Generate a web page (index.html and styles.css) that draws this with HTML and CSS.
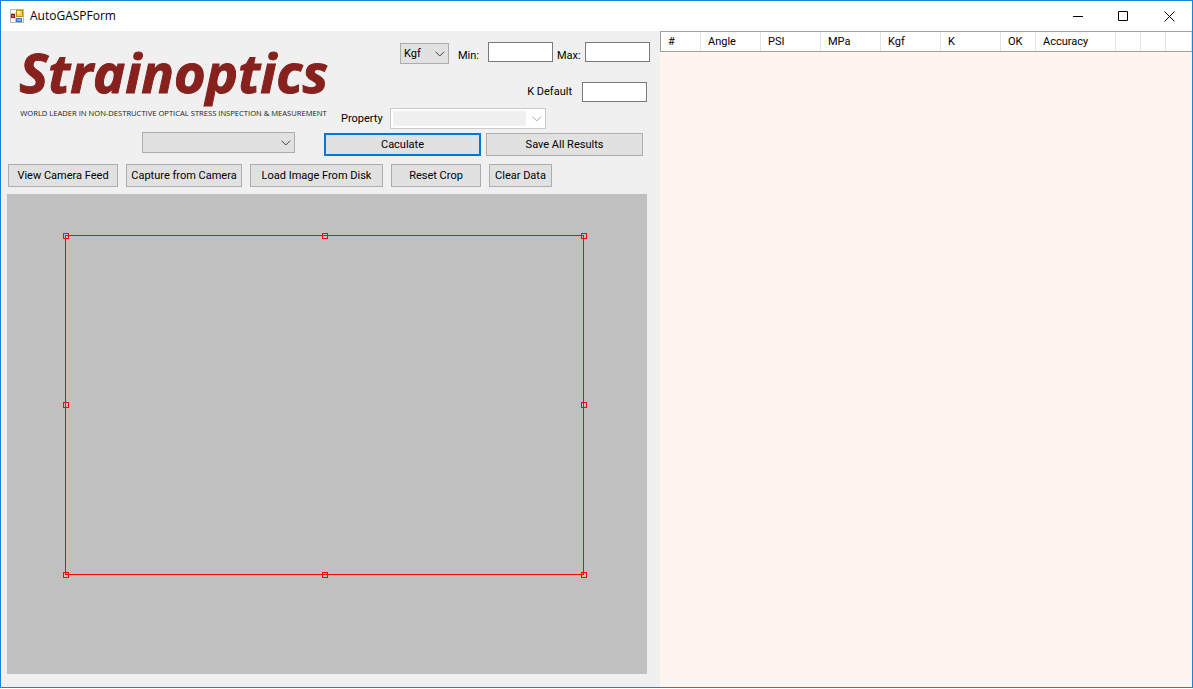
FILE: index.html
```html
<!DOCTYPE html>
<html lang="en">
<head>
<meta charset="utf-8">
<title>AutoGASPForm</title>
<link rel="stylesheet" href="styles.css">
</head>
<body>
<div class="window">
  <header class="titlebar">
    <svg class="app-icon" width="14" height="14" viewBox="0 0 14 14" aria-hidden="true">
      <rect x=".5" y=".5" width="13" height="13" fill="#fff" stroke="#b8b8b8"/>
      <path d="M0 4.500h6M5.500 8v6" stroke="#c4c4c4" fill="none"/>
      <rect x="6.500" y="1.500" width="6" height="6" fill="#fbd14b" stroke="#c08a10"/>
      <rect x="7" y="2" width="3" height="3" fill="#fff0a8"/>
      <rect x="1.500" y="5.500" width="3" height="3" fill="#e05a4a" stroke="#8c1c1c"/>
      <rect x="6.500" y="9.500" width="5" height="3" fill="#7fb0ff" stroke="#3c6fd0"/>
    </svg>
    <h1 class="title">AutoGASPForm</h1>
    <button class="caption-btn" aria-label="Minimize"><svg width="11" height="11"><path d="M1 5.500h10" stroke="#000"/></svg></button>
    <button class="caption-btn" aria-label="Maximize"><svg width="11" height="11"><path d="M.5 .5h9v9h-9z" stroke="#000" fill="none"/></svg></button>
    <button class="caption-btn" aria-label="Close"><svg width="11" height="11"><path d="M.5 .5l10 10M10.500 .5l-10 10" stroke="#000"/></svg></button>
  </header>
  <main class="content">
    <section class="left">
      <div class="top">
        <div class="brand">
          <svg class="brand-mark" viewBox="0 0 3100 800">
            <text class="logo" x="-8" y="515">Strainoptics</text>
            <text class="tagline" x="3" y="753">WORLD LEADER IN NON-DESTRUCTIVE OPTICAL STRESS INSPECTION &amp; MEASUREMENT</text>
          </svg>
          <span class="combo camera"><select aria-label="Camera"><option></option></select><svg class="chevron" width="10" height="6"><path d="M.5 .7l4.300 4.300 4.300-4.300" fill="none" stroke="#444"/></svg></span>
        </div>
        <div class="controls">
          <div class="row range">
            <span class="combo unit"><select aria-label="Unit"><option>Kgf</option></select><svg class="chevron" width="10" height="6"><path d="M.5 .7l4.300 4.300 4.300-4.300" fill="none" stroke="#444"/></svg></span>
            <label class="min-label" for="min">Min:</label><input id="min" type="text">
            <label class="max-label" for="max">Max:</label><input id="max" type="text">
          </div>
          <div class="row kdef"><label for="kd">K Default</label><input id="kd" type="text"></div>
          <div class="row prop"><label for="prop">Property</label>
            <span class="combo property"><select id="prop" disabled><option></option></select><svg class="chevron" width="10" height="6"><path d="M.5 .7l4.300 4.300 4.300-4.300" fill="none" stroke="#aaa"/></svg></span>
          </div>
          <div class="row actions"><button class="btn default">Caculate</button><button class="btn">Save All Results</button></div>
        </div>
      </div>
      <div class="toolbar">
        <button class="btn feed">View Camera Feed</button>
        <button class="btn capture">Capture from Camera</button>
        <button class="btn load">Load Image From Disk</button>
        <button class="btn reset">Reset Crop</button>
        <button class="btn clear">Clear Data</button>
      </div>
      <div class="canvas">
        <div class="crop">
          <i class="handle t l"></i><i class="handle t c"></i><i class="handle t r"></i>
          <i class="handle m l"></i><i class="handle m r"></i>
          <i class="handle b l"></i><i class="handle b c"></i><i class="handle b r"></i>
        </div>
      </div>
    </section>
    <section class="results">
      <table>
        <colgroup><col class="w40"><col class="w60"><col class="w60"><col class="w60"><col class="w60"><col class="w60"><col class="w35"><col class="w80"><col class="w25"><col class="w25"><col></colgroup>
        <thead><tr><th>#</th><th>Angle</th><th>PSI</th><th>MPa</th><th>Kgf</th><th>K</th><th>OK</th><th>Accuracy</th><th></th><th></th><th></th></tr></thead>
      </table>
    </section>
  </main>
</div>
</body>
</html>
```
FILE: styles.css
```css
* { box-sizing: border-box; }
body {
  margin: 0;
  background: #fff;
  color: #000;
  font: 11px/14px Roboto, "Liberation Sans", sans-serif;
}
button, input, select { font: inherit; color: inherit; margin: 0; border-radius: 0; }
.window {
  display: flex;
  flex-direction: column;
  height: calc(100vh - 1px);
  border: 1px solid #1883d7;
  background: #f0f0f0;
}
.titlebar { display: flex; align-items: center; height: 30px; padding-left: 9px; background: #fff; }
.title { flex: 1; margin: 0 0 0 6px; font: 12px/16px "Open Sans", "Noto Sans", sans-serif; }
.caption-btn {
  display: grid;
  place-items: center;
  width: 46px;
  height: 28px;
  padding: 0;
  border: 0;
  background: none;
}
.content { display: grid; grid-template-columns: minmax(0, 659fr) minmax(0, 532fr); flex: 1; }
.left { display: flex; flex-direction: column; padding: 0 13px 13px 6px; }
.top { display: flex; height: 125px; }
.brand { flex: 1; min-width: 0; padding: 10px 0 0 13px; }
.brand-mark { display: block; width: 310px; height: 80px; overflow: visible; }
.logo { fill: #86211d; stroke: #86211d; stroke-width: 10px; font: italic 700 542px "Open Sans", "Noto Sans", sans-serif; }
.tagline { fill: #222; font: 76px "Open Sans", "Noto Sans", sans-serif; }
.combo { position: relative; display: block; }
.combo select {
  appearance: none;
  display: block;
  width: 100%;
  height: 21px;
  padding: 0 3px;
  border: 1px solid #adadad;
  background: #e1e1e1;
}
.chevron { position: absolute; right: 4px; top: 8px; pointer-events: none; }
.camera { width: 153px; margin: 11px 0 0 122px; }
.controls { width: 323px; }
.row { display: flex; }
.row input { width: 65px; height: 20px; padding: 0 3px; border: 1px solid #7a7a7a; background: #fff; }
.range { margin: 11px -3px 0 0; justify-content: flex-end; }
.unit { width: 49px; margin-top: 1px; }
.min-label { width: 30px; margin: 7px 0 0 9px; }
.max-label { width: 28px; margin: 7px 0 0 4px; }
.kdef { margin-top: 18px; justify-content: flex-end; align-items: center; gap: 10px; }
.prop { margin: 6px 0 0 17px; align-items: center; }
.prop label { width: 49px; }
.property { width: 156px; }
.property select {
  height: 21px;
  border-color: #ccc;
  background: linear-gradient(#f0f0f0, #f0f0f0) 2px 2px / 133px 15px no-repeat #fff;
  opacity: 1;
}
.actions { margin-top: 4px; gap: 5px; }
.actions .btn { width: 157px; }
.btn { height: 23px; padding: 0; border: 1px solid #adadad; background: #e1e1e1; white-space: nowrap; }
.btn.default { border: 2px solid #0078d7; }
.toolbar { display: flex; gap: 8px; padding: 8px 0 7px 1px; }
.feed { width: 110px; }
.capture { width: 116px; }
.load { width: 133px; }
.reset { width: 90px; }
.clear { width: 63px; }
.canvas { position: relative; flex: 1; background: #c0c0c0; }
.crop { position: absolute; inset: 41px 63px 99px 58px; border: 1px solid #f00; }
.handle { position: absolute; width: 6px; height: 6px; border: 1px solid #f00; }
.t { top: -3px; }
.m { top: calc(50% - 3px); }
.b { bottom: -4px; }
.l { left: -3px; }
.c { left: calc(50% - 3px); }
.r { right: -4px; }
.results { background: #fff4ee; }
table { width: 100%; table-layout: fixed; border-collapse: separate; border-spacing: 0; border: 1px solid #a0a0a0; border-right: 0; background: #fff; }
th { height: 19px; padding: 0 0 0 7px; border-right: 1px solid #e5e5e5; font-weight: 400; text-align: left; }
.w25 { width: 25px; }
.w35 { width: 35px; }
.w40 { width: 40px; }
.w60 { width: 60px; }
.w80 { width: 80px; }
```
